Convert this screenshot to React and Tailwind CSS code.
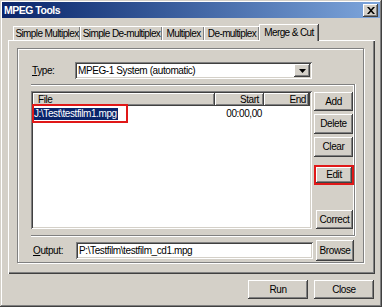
import React from 'react'

const raised =
  'bg-[#d4d0c8] shadow-[inset_-1px_-1px_#404040,inset_1px_1px_#fff,inset_-2px_-2px_#808080,inset_2px_2px_#d4d0c8]'
const sunken =
  'bg-white shadow-[inset_1px_1px_#808080,inset_-1px_-1px_#fff,inset_2px_2px_#404040,inset_-2px_-2px_#d4d0c8]'

function Button({ label, className = '' }) {
  return (
    <div className={`flex items-center justify-center whitespace-nowrap ${raised} ${className}`}>
      <span>{label}</span>
    </div>
  )
}

function Tab({ label, width, selected }) {
  if (selected) {
    return (
      <div
        className="relative z-10 -mb-[1px] h-[17px] flex items-start justify-center pt-[3px] whitespace-nowrap tracking-[-0.6px] bg-[#d4d0c8] border-t border-l border-white shadow-[inset_-1px_0_#808080,1px_0_#404040]"
        style={{ width }}
      >
        {label}
      </div>
    )
  }
  return (
    <div
      className="h-[14px] flex items-center justify-center whitespace-nowrap tracking-[-0.6px] border-t border-l border-white shadow-[inset_-1px_0_#808080,1px_0_#404040]"
      style={{ width }}
    >
      {label}
    </div>
  )
}

export default function App() {
  return (
    <div className="w-[382px] h-[307px] bg-[#d4d0c8] p-[2px] flex flex-col text-[10px] tracking-[-0.4px] leading-none text-black font-['Liberation_Sans',Arial,sans-serif] shadow-[inset_-1px_-1px_#404040,inset_1px_1px_#d4d0c8,inset_-2px_-2px_#808080,inset_2px_2px_#fff]">
      {/* title bar */}
      <div className="h-[16px] flex items-center justify-between pl-[2px] pr-[2px] bg-gradient-to-r from-[#0a246a] to-[#7ea6dc]">
        <span className="text-white font-bold text-[10.5px] tracking-[-0.5px]">MPEG Tools</span>
        <div className={`w-[15px] h-[13px] flex items-center justify-center ${raised}`}>
          <svg width="8" height="7" viewBox="0 0 8 7">
            <path d="M0 0h2l2 2.2L6 0h2L5 3.5 8 7H6L4 4.8 2 7H0l3-3.5z" fill="#000" />
          </svg>
        </div>
      </div>

      <div className="mt-[6px] ml-[6px] flex flex-col">
        {/* tabs */}
        <div className="flex items-end h-[16px] pl-[5px]">
          <Tab label="Simple Multiplex" width={67} />
          <Tab label="Simple De-multiplex" width={82} />
          <Tab label="Multiplex" width={42} />
          <Tab label="De-multiplex" width={55} />
          <Tab label="Merge & Cut" width={59} selected />
        </div>

        {/* tab page */}
        <div className="w-[367px] h-[234px] pl-[9px] pt-[8px] shadow-[inset_1px_1px_#fff,inset_-1px_-1px_#404040,inset_-2px_-2px_#808080]">
          <div className="w-[347px] h-[215px] border border-[#808080] shadow-[inset_1px_1px_#fff,1px_1px_#fff] pl-[13px] pt-[13px]">
            {/* type row */}
            <div className="flex items-center h-[17px]">
              <span className="w-[44px] pl-[1px]">
                <span className="underline">T</span>ype:
              </span>
              <div className={`w-[237px] h-[17px] flex items-center justify-between p-[2px] ${sunken}`}>
                <span className="pl-[1px]">MPEG-1 System (automatic)</span>
                <div className={`w-[16px] h-[13px] flex items-center justify-center ${raised}`}>
                  <svg width="7" height="4" viewBox="0 0 7 4">
                    <path d="M0 0h7L3.5 4z" fill="#000" />
                  </svg>
                </div>
              </div>
            </div>

            {/* list frame */}
            <div className="mt-[5px] w-[324px] h-[152px] border-t border-r border-b border-[#808080] shadow-[inset_0_1px_#fff,inset_-1px_0_#fff,0_1px_#fff,1px_0_#fff] flex">
              <div className={`relative mt-[6px] w-[282px] h-[138px] p-[2px] ${sunken}`}>
                <div className="flex h-[13px]">
                  <div className={`w-[182px] flex items-center pl-[5px] ${raised}`}>File</div>
                  <div className={`w-[49px] flex items-center justify-end pr-[5px] ${raised}`}>Start</div>
                  <div className={`w-[45px] flex items-center justify-end pr-[3px] ${raised}`}>End</div>
                  <div className={`flex-1 ${raised}`} />
                </div>
                <div className="flex h-[13px] mt-[1px]">
                  <div className="w-[182px] flex items-center">
                    <span className="bg-[#0a246a] text-white px-[1px] h-[12px] flex items-center">
                      J:\Test\testfilm1.mpg
                    </span>
                  </div>
                  <div className="w-[49px] flex items-center justify-end pr-[2px]">00:00,00</div>
                </div>
                <div className="absolute left-[1px] top-[13px] w-[96px] h-[19px] border-2 border-[#e01818]" />
              </div>

              <div className="ml-[2px] mt-[7px] flex flex-col">
                <Button label="Add" className="w-[39px] h-[19px]" />
                <Button label="Delete" className="w-[39px] h-[20px] mt-[3px]" />
                <Button label="Clear" className="w-[39px] h-[20px] mt-[3px]" />
                <div className="mt-[8px] w-[40px] h-[20px] border-2 border-[#e01818]">
                  <Button label="Edit" className="w-full h-full" />
                </div>
                <Button label="Correct" className="ml-[2px] w-[37px] h-[19px] mt-[25px]" />
              </div>
            </div>

            {/* output row */}
            <div className="mt-[4px] flex items-center h-[21px]">
              <span className="w-[45px] pl-[2px]">
                <span className="underline">O</span>utput:
              </span>
              <div className={`w-[237px] h-[17px] flex items-center px-[3px] ${sunken}`}>
                P:\Testfilm\testfilm_cd1.mpg
              </div>
              <Button label="Browse" className="ml-[3px] w-[38px] h-[21px]" />
            </div>
          </div>
        </div>
      </div>

      {/* bottom buttons */}
      <div className="mt-[6px] flex justify-end gap-[6px] pr-[6px]">
        <Button label="Run" className="w-[60px] h-[19px]" />
        <Button label="Close" className="w-[60px] h-[19px]" />
      </div>
    </div>
  )
}
